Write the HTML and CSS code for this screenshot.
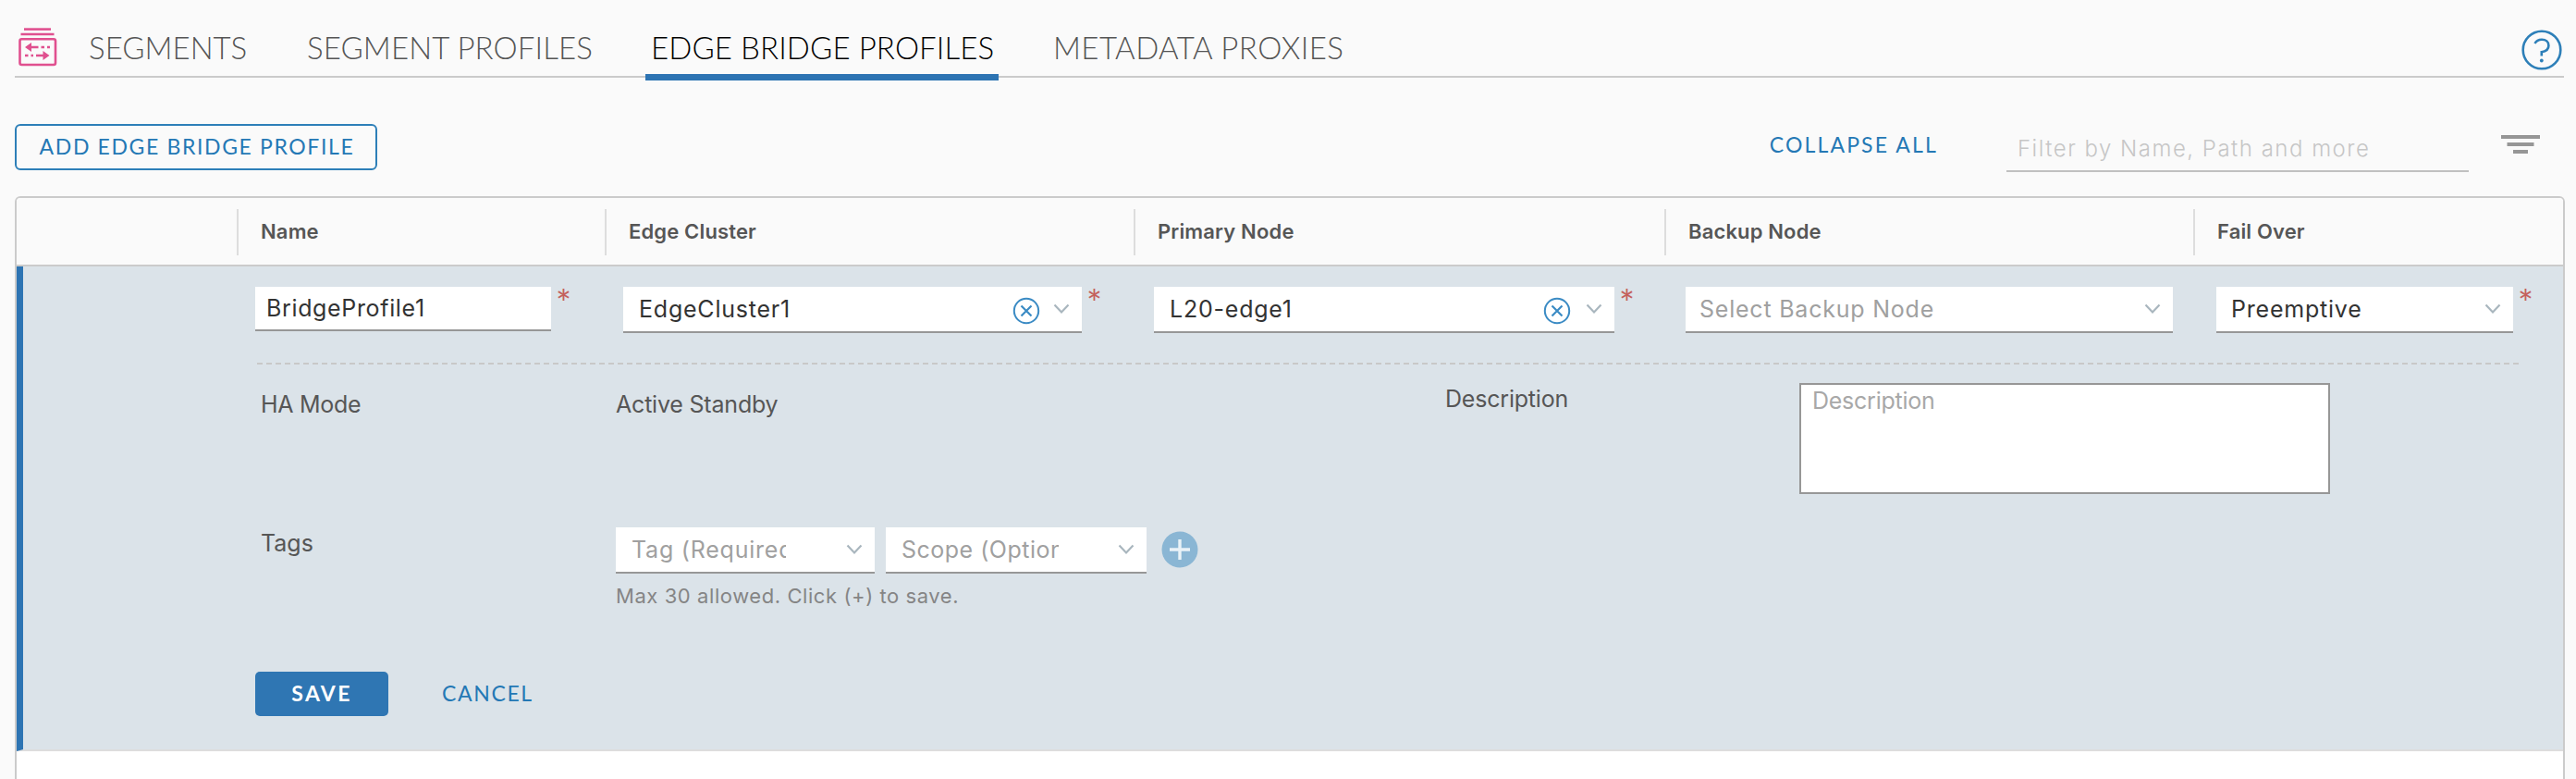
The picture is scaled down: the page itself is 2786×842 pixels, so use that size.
FILE: index.html
```html
<!DOCTYPE html>
<html lang="en">
<head>
    <meta charset="UTF-8">
    <meta name="viewport" content="width=device-width, initial-scale=1.0">
    <title>Edge Bridge Profiles</title>
    <link rel="stylesheet" href="styles.css">
</head>
<body>
    <svg class="defs">
        <symbol id="chevron" viewBox="0 0 18 12">
            <path d="M1.5 1.5L9 9.5L16.5 1.5" fill="none" stroke="#a9b6be" stroke-width="2.2"/>
        </symbol>
        <symbol id="clear" viewBox="0 0 30 30">
            <circle cx="15" cy="15" r="13.2" fill="none" stroke="#3b8bc4" stroke-width="2"/>
            <path d="M9.5 9.5L20.5 20.5M20.5 9.5L9.5 20.5" stroke="#3b8bc4" stroke-width="2.2"/>
        </symbol>
    </svg>

    <nav class="tabs">
        <svg class="tabs-icon" viewBox="0 0 42 42">
            <g fill="none" stroke="#e0508f">
                <path d="M6 1.6H35" stroke-width="2.6"/>
                <path d="M2.5 7H38.5" stroke-width="2.6"/>
                <rect x="1.5" y="12.3" width="38.5" height="27.7" rx="2" stroke-width="2.6"/>
                <path d="M10 21H21.5M24.5 21H28M31 21H34" stroke-width="2.6"/>
                <path d="M7 30H10.5M13.5 30H16M19 30H31" stroke-width="2.6"/>
            </g>
            <path d="M7 21L14 16V26ZM33.5 30L26.5 25V35Z" fill="#e0508f"/>
        </svg>
        <a class="tab tab-segments">SEGMENTS</a>
        <a class="tab tab-profiles">SEGMENT PROFILES</a>
        <a class="tab active">EDGE BRIDGE PROFILES</a>
        <a class="tab tab-metadata">METADATA PROXIES</a>
        <svg class="help" viewBox="0 0 44 44">
            <circle cx="22" cy="22" r="20.3" fill="none" stroke="#2d7fb8" stroke-width="2.6"/>
            <path d="M14.5 15C16 12.2 18.6 10.8 22 10.8C26.4 10.8 29.4 13.4 29.4 17.2C29.4 21.4 26.4 23.6 21.8 24.2V28.5" fill="none" stroke="#2d7fb8" stroke-width="2.6"/>
            <circle cx="21.8" cy="33.5" r="1.9" fill="#2d7fb8"/>
        </svg>
    </nav>

    <div class="toolbar">
        <button class="btn btn-outline">ADD EDGE BRIDGE PROFILE</button>
        <button class="btn btn-link collapse">COLLAPSE ALL</button>
        <input class="filter" type="text" placeholder="Filter by Name, Path and more">
        <svg class="filter-icon" viewBox="0 0 44 20">
            <path d="M1 2H43M7.5 10H36.5M14 18H30" stroke="#969696" stroke-width="4"/>
        </svg>
    </div>

    <div class="table">
        <div class="table-head">
            <div></div>
            <div class="head-cell">Name</div>
            <div class="head-cell">Edge Cluster</div>
            <div class="head-cell">Primary Node</div>
            <div class="head-cell">Backup Node</div>
            <div class="head-cell">Fail Over</div>
        </div>

        <div class="row-edit">
            <div class="fields">
                <div class="field">
                    <input class="name-input" type="text" value="BridgeProfile1">
                    <span class="required">*</span>
                </div>
                <div class="field">
                    <div class="select cluster">
                        <span class="value">EdgeCluster1</span>
                        <svg class="clear"><use href="#clear"/></svg>
                        <svg class="chevron"><use href="#chevron"/></svg>
                    </div>
                    <span class="required">*</span>
                </div>
                <div class="field">
                    <div class="select primary">
                        <span class="value">L20-edge1</span>
                        <svg class="clear"><use href="#clear"/></svg>
                        <svg class="chevron"><use href="#chevron"/></svg>
                    </div>
                    <span class="required">*</span>
                </div>
                <div class="field">
                    <div class="select backup">
                        <span class="value placeholder">Select Backup Node</span>
                        <svg class="chevron"><use href="#chevron"/></svg>
                    </div>
                </div>
                <div class="field">
                    <div class="select failover">
                        <span class="value">Preemptive</span>
                        <svg class="chevron"><use href="#chevron"/></svg>
                    </div>
                    <span class="required">*</span>
                </div>
            </div>

            <div class="divider"></div>

            <div class="details">
                <div class="label label-mode">HA Mode</div>
                <div class="text">Active Standby</div>
                <div class="label label-desc">Description</div>
                <textarea class="description" placeholder="Description"></textarea>
            </div>

            <div class="tags">
                <div class="label label-tags">Tags</div>
                <div>
                    <div class="tag-inputs">
                        <div class="select tag">
                            <span class="value placeholder">Tag (Required)</span>
                            <svg class="chevron"><use href="#chevron"/></svg>
                        </div>
                        <div class="select scope">
                            <span class="value placeholder">Scope (Optional)</span>
                            <svg class="chevron"><use href="#chevron"/></svg>
                        </div>
                        <svg class="add" viewBox="0 0 40 40">
                            <circle cx="20" cy="20" r="19.5" fill="#8ab6d4"/>
                            <path d="M20 9V31M9 20H31" stroke="#eaf2f7" stroke-width="3.4"/>
                        </svg>
                    </div>
                    <div class="hint">Max 30 allowed. Click (+) to save.</div>
                </div>
            </div>

            <div class="actions">
                <button class="btn btn-primary">SAVE</button>
                <button class="btn btn-link">CANCEL</button>
            </div>
        </div>
    </div>
</body>
</html>
```
FILE: styles.css
```css
* {
    box-sizing: border-box;
}
html {
    overflow: hidden;
}
body {
    margin: 0;
    padding: 0 12px 0 16px;
    height: 842px;
    overflow: hidden;
    background-color: #fafafa;
    color: #565656;
    font-family: Inter, "Open Sans", sans-serif;
    font-size: 25px;
    line-height: 30px;
}
svg {
    display: block;
    flex: none;
}
.defs {
    position: absolute;
    width: 0;
    height: 0;
}
input, textarea, button {
    font: inherit;
    border-radius: 0;
    outline: none;
}

/* tabs */
.tabs {
    display: flex;
    height: 84px;
    margin-right: 1px;
    border-bottom: 2px solid #cbcbcb;
}
.tabs-icon {
    width: 42px;
    height: 42px;
    margin: 30px 29px 0 4px;
}
.tab {
    height: 87px;
    padding: 31px 6px 0;
    font-family: Lato, sans-serif;
    font-size: 33px;
    font-weight: 300;
    line-height: 40px;
    white-space: nowrap;
    color: #555;
}
.tab-segments {
    width: 182px;
    padding-left: 5px;
    margin-right: 53px;
}
.tab-profiles {
    width: 322px;
    margin-right: 50px;
    letter-spacing: 0.1px;
}
.tab-metadata {
    margin-left: 53px;
    letter-spacing: 0.4px;
}
.tab.active {
    width: 382px;
    color: #000;
    letter-spacing: 0.1px;
    border-bottom: 7px solid #2d74b3;
}
.help {
    width: 44px;
    height: 44px;
    margin: 32px 2px 0 auto;
}

/* toolbar */
.toolbar {
    display: flex;
    height: 128px;
}
.btn {
    padding: 0 0 2px;
    border: none;
    background: none;
    font-family: Lato, sans-serif;
    font-size: 23px;
    letter-spacing: 1.63px;
    white-space: nowrap;
    cursor: pointer;
}
.btn-outline {
    width: 392px;
    height: 50px;
    margin-top: 50px;
    padding-left: 2px;
    border: 2px solid #2d7fb8;
    border-radius: 6px;
    color: #2478b5;
}
.btn-link {
    color: #2478b5;
}
.collapse {
    height: 30px;
    margin: 57px 74px 0 auto;
    letter-spacing: 2.14px;
}
.filter {
    width: 500px;
    height: 41px;
    margin: 61px 34px 0 0;
    padding: 0 12px 9px;
    border: none;
    border-bottom: 2px solid #c0c0c0;
    background: none;
    font-size: 24px;
    font-weight: 300;
    letter-spacing: 1.5px;
}
.filter::placeholder {
    color: #c6c6c6;
}
.filter-icon {
    width: 44px;
    height: 20px;
    margin: 62px 26px 0 0;
}

/* table */
.table {
    height: 660px;
    border: 2px solid #cbcbcb;
    border-radius: 6px 6px 0 0;
    background-color: #fff;
}
.table-head {
    display: grid;
    grid-template-columns: 238px 398px 572px 574px 572px 1fr;
    height: 74px;
    padding-top: 12px;
    border-bottom: 2px solid #cbcbcb;
    border-radius: 4px 4px 0 0;
    background-color: #fafafa;
}
.head-cell {
    height: 50px;
    padding-left: 24px;
    border-left: 2px solid #ddd;
    font-size: 22px;
    font-weight: 600;
    line-height: 48px;
    letter-spacing: 0.15px;
}
.row-edit {
    height: 524px;
    padding: 22px 0 0 251px;
    border-left: 7px solid #2d74b3;
    border-bottom: 2px solid #ddd;
    background-color: #dbe3e9;
}
.fields {
    display: grid;
    grid-template-columns: 398px 574px 575px 574px 1fr;
}
.field {
    display: flex;
}
.name-input {
    width: 320px;
    height: 48px;
    padding: 0 12px;
    border: none;
    border-bottom: 2px solid #979797;
    background-color: #fff;
    color: #333;
    letter-spacing: 0.65px;
}
.required {
    width: 14px;
    height: 30px;
    margin-left: 5px;
    font-family: Lato, sans-serif;
    font-size: 40px;
    line-height: 37px;
    color: #c4605c;
}
.select {
    display: flex;
    align-items: center;
    height: 50px;
    padding: 0 13px 0 17px;
    border-bottom: 2px solid #979797;
    background-color: #fff;
}
.value {
    flex: 1;
    overflow: hidden;
    white-space: nowrap;
    color: #333;
    letter-spacing: 0.78px;
}
.placeholder {
    color: #a0a0a0;
}
.chevron {
    width: 18px;
    height: 12px;
}
.clear {
    width: 30px;
    height: 30px;
    margin: 3px 14px 0 0;
}
.cluster {
    width: 496px;
}
.primary {
    width: 498px;
}
.primary .clear {
    margin-right: 16px;
}
.backup {
    width: 527px;
    padding-left: 15px;
}
.failover {
    width: 321px;
    padding-left: 16px;
}
.divider {
    width: 2446px;
    height: 2px;
    margin: 32px 0 0 2px;
    background: repeating-linear-gradient(90deg, #c8c8c8 0 6px, transparent 6px 10px);
}
.details {
    display: grid;
    grid-template-columns: 390px 897px 383px 574px;
    height: 176px;
    padding-top: 20px;
}
.label {
    padding: 8px 0 0 6px;
}
.label-mode {
    letter-spacing: -0.3px;
}
.text {
    padding-top: 8px;
    letter-spacing: -0.2px;
}
.label-desc {
    padding: 2px 0 0;
    letter-spacing: -0.2px;
}
.description {
    width: 574px;
    height: 120px;
    padding: 2px 12px;
    border: 2px solid #979797;
    background-color: #fff;
    resize: none;
    letter-spacing: -0.25px;
}
.description::placeholder {
    color: #a8a8a8;
}
.tags {
    display: grid;
    grid-template-columns: 390px 1fr;
    height: 156px;
}
.label-tags {
    padding-top: 2px;
}
.tag-inputs {
    display: flex;
    align-items: flex-start;
}
/* values are clipped well before the chevron */
.tag-inputs .value {
    flex: none;
    width: 167px;
    margin-right: auto;
}
.tag {
    width: 280px;
    margin-right: 12px;
}
.scope {
    width: 282px;
    margin-right: 16px;
}
.tag-inputs .scope .value {
    width: 170px;
    letter-spacing: 0.5px;
}
.add {
    width: 40px;
    height: 40px;
    margin-top: 4px;
}
.hint {
    padding-top: 9px;
    color: #858585;
    font-size: 22px;
    letter-spacing: 0.57px;
}
.actions {
    display: flex;
    gap: 58px;
    align-items: center;
}
.btn-primary {
    width: 144px;
    height: 48px;
    border-radius: 5px;
    background-color: #2f76b3;
    color: #fff;
    font-weight: 700;
    letter-spacing: 2.3px;
}
```
